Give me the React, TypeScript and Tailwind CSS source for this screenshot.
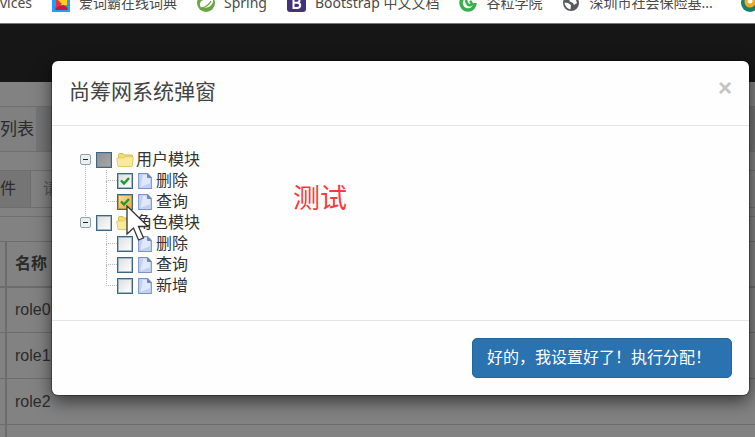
import React, { useState } from 'react';
import type { ReactNode } from 'react';

const cjk = 'font-["Liberation_Sans","Noto_Sans_CJK_SC",sans-serif]';

const DictIcon = () => (
  <svg viewBox="0 0 18 18" className="size-[18px] shrink-0" aria-hidden="true">
    <rect width="18" height="18" fill="#1da1f2" />
    <rect x="4" y="2" width="11" height="9" fill="#ffd21f" />
    <path d="M3.500 16V13.500L8 11L9.500 12L11 11L15.500 13.500V16Z" fill="#d4143c" />
    <path d="M4 14V4L10 10Z" fill="#e8304a" />
  </svg>
);

const SpringIcon = () => (
  <svg viewBox="0 0 18 18" className="size-[18px] shrink-0" aria-hidden="true">
    <circle cx="9" cy="9" r="9" fill="#68a63f" />
    <path d="M15.5 2.5C14 5 11 5 8 5.500C3 6.500 1.500 10 4 13.500C9 14.500 14 13 15.500 9.500C16.500 7 16 4.500 15.500 2.500Z" fill="#fff" />
    <path d="M4 14.200C8 13.500 12 11 14 7" stroke="#68a63f" strokeWidth="1.3" fill="none" />
  </svg>
);

const BootstrapIcon = () => (
  <svg viewBox="0 0 19 18" className="h-[18px] w-[19px] shrink-0" aria-hidden="true">
    <rect width="19" height="18" rx="3" fill="#46307c" />
    <path d="M6.500 4H10Q12.500 4 12.500 6.300Q12.500 8.700 10 8.700H6.500M10 8.700Q13.200 8.700 13.200 11.300Q13.200 14 10 14H6.500V4" stroke="#fff" strokeWidth="2" fill="none" />
  </svg>
);

const AcademyIcon = () => (
  <svg viewBox="0 0 18 18" className="size-[18px] shrink-0" aria-hidden="true">
    <path d="M9 2A7 7 0 1 0 16 9" stroke="#35b04a" strokeWidth="3.500" fill="none" />
    <path d="M7 6Q8 12 12 11Q14 10 11 7" stroke="#35b04a" strokeWidth="2.500" fill="none" />
  </svg>
);

const GlobeIcon = () => (
  <svg viewBox="0 0 18 18" className="size-[18px] shrink-0" aria-hidden="true">
    <circle cx="9" cy="9" r="8" fill="#57595c" />
    <path d="M2.500 8.500L6 9L9 11L8.500 15.500Q3 14 2.500 8.500ZM10 4L14 6L15 9L12 11L11 9L7 7Z" fill="#fff" />
  </svg>
);

const RingIcon = () => (
  <svg viewBox="0 0 18 18" className="ml-2 size-[18px] shrink-0" aria-hidden="true">
    <circle cx="9" cy="9" r="9" fill="#16806a" />
    <circle cx="9" cy="8" r="5.500" fill="#f8a91f" />
    <circle cx="9" cy="7" r="2.500" fill="#fff" />
  </svg>
);

const bookmarks: { label: string; icon: ReactNode }[] = [
  { label: '爱词霸在线词典', icon: <DictIcon /> },
  { label: 'Spring', icon: <SpringIcon /> },
  { label: 'Bootstrap 中文文档', icon: <BootstrapIcon /> },
  { label: '谷粒学院', icon: <AcademyIcon /> },
  { label: '深圳市社会保险基...', icon: <GlobeIcon /> },
  { label: '', icon: <RingIcon /> },
];

const BookmarkBar = () => (
  <nav className="h-6 overflow-hidden border-b border-[#777] bg-white font-['Noto_Sans','Noto_Sans_CJK_SC',sans-serif] text-[14px] leading-5 text-[#4a4a4a]">
    <div className="-mt-[7px] flex items-center gap-5 whitespace-nowrap">
      <a href="#services" className="flex w-8 shrink-0 justify-end">vices</a>
      {bookmarks.map(({ label, icon }) => (
        <a key={label} href="#bookmark" aria-label={label || 'bookmark'} className="flex shrink-0 items-center gap-[9px]">
          {icon}
          {label && <span>{label}</span>}
        </a>
      ))}
    </div>
  </nav>
);

const RolePage = () => (
  <div className={`${cjk} min-h-[413px] overflow-hidden bg-[#828282] text-[16px] text-[#2b2b2b]`}>
    <div className="h-[58px] bg-[#161616]" />
    <div className="mt-6 flex h-[46px] border-y border-[#6f6f6f] bg-[#757575] text-[17px]">
      <h1 className="flex w-9 items-center bg-[#808080] pt-0.5">列表</h1>
    </div>
    <div className="mt-[18px] flex h-[38px] border-y border-[#6f6f6f]">
      <label htmlFor="query" className="flex w-[31px] shrink-0 items-center border-r border-[#6c6c6c] bg-[#757575]">件</label>
      <input id="query" type="text" placeholder="请输入查询条件" className="w-40 pl-3 placeholder:text-[#555]" />
    </div>
    <div className="mt-2 h-px bg-[#707070]" />
    <table className="mt-6 w-full table-fixed border-collapse text-left">
      <thead>
        <tr className="h-[45px] border-t border-b-2 border-t-[#6c6c6c] border-b-[#6c6c6c]">
          <th className="w-[6px] border-r-2 border-[#6c6c6c]" />
          <th className="px-2 font-bold">名称</th>
        </tr>
      </thead>
      <tbody>
        {['role0', 'role1', 'role2', ''].map((role) => (
          <tr key={role} className="h-[46px] border-b border-[#6c6c6c]">
            <td className="border-r-2 border-[#6c6c6c]" />
            <td className="px-2">{role}</td>
          </tr>
        ))}
      </tbody>
    </table>
  </div>
);

const FolderIcon = () => (
  <svg viewBox="0 0 18 16" className="h-4 w-[18px] shrink-0" aria-hidden="true">
    <path d="M2.500 14V2.500Q2.500 1.500 3.500 1.500H7L8.500 3H15.500Q16.500 3 16.500 4V13L15.500 14.500H3Z" fill="#f2dc78" stroke="#d8bb4d" />
    <path d="M.7 7Q.6 6 1.600 6H7.500L9 4.800H16.500Q17.500 4.800 17.300 6L16.300 13.500Q16 14.600 15 14.600H3Q2 14.600 1.800 13.600Z" fill="#f8ea9d" stroke="#dfc65f" strokeWidth=".8" />
  </svg>
);

const FileIcon = () => (
  <svg viewBox="0 0 14 16" className="h-4 w-3.5 shrink-0" aria-hidden="true">
    <path d="M.7.7H9.500L13.300 4.500V15.300H.7Z" fill="#dfe9fb" stroke="#7d92c4" strokeWidth="1.2" />
    <path d="M2 14V2H5L2.500 14ZM2 14L12.500 10V14.500H2Z" fill="#bfd1f3" />
    <path d="M9.500 1.300V4.500H12.700Z" fill="#6f8fcb" stroke="#5b7bb8" strokeWidth=".8" />
  </svg>
);

type NodeProps = { id: string; label: string; checked?: boolean; partial?: boolean; hover?: boolean; icon: ReactNode };

const NodeCheck = ({ id, label, checked = false, partial, hover, icon }: NodeProps) => {
  const [on, setOn] = useState(checked);
  const fill = partial
    ? 'from-[#8e8f92] to-[#a9a8a8] shadow-[inset_0_0_0_1px_#7f93a3]'
    : hover
      ? 'from-[#fbe3a0] to-[#e8a52c] shadow-[inset_0_0_0_1px_#c79a48]'
      : 'from-[#dcdedd] to-[#ffffff] shadow-[inset_0_0_0_1px_#a3bac6]';

  return (
    <div className="flex h-[21px] items-center">
      <span className="relative grid size-4 shrink-0 place-items-center">
        <input
          id={id}
          type="checkbox"
          checked={on}
          onChange={(e) => setOn(e.target.checked)}
          className={`size-4 appearance-none border border-[#3f6680] bg-linear-to-br ${fill}`}
        />
        {on && (
          <svg viewBox="0 0 16 16" className="pointer-events-none absolute inset-0 size-4" aria-hidden="true">
            <path d="M4 7.500L7 10.500L12 5" stroke="#1f9a2c" strokeWidth="2.400" fill="none" />
          </svg>
        )}
      </span>
      <label htmlFor={id} className="flex items-center whitespace-nowrap">{icon}{label}</label>
    </div>
  );
};

const modules = [
  { label: '用户模块', partial: true, items: [{ label: '删除', checked: true }, { label: '查询', checked: true, hover: true }] },
  { label: '角色模块', partial: false, items: [{ label: '删除' }, { label: '查询' }, { label: '新增' }] },
];

const PermissionTree = () => (
  <ul className="text-[16px] leading-[21px] text-[#333]">
    {modules.map((group, g) => (
      <li key={group.label} className="flex gap-[5px]">
        <div className="flex w-3 flex-col items-center">
          <button type="button" aria-label="折叠" className="mt-[5px] grid h-[11px] w-[11px] shrink-0 place-items-center rounded-[2px] border border-[#8ba3b5] bg-[#eeeeea]">
            <span className="h-px w-[5px] bg-[#222]" />
          </button>
          {g === 0 && <span className="-mb-1 grow border-l border-dotted border-[#bbb]" />}
        </div>
        <div>
          <NodeCheck
            id={`group-${g}`}
            label={group.label}
            partial={group.partial}
            icon={<span className="pr-0.5 pl-1"><FolderIcon /></span>}
          />
          <ul className="ml-2.5">
            {group.items.map((item, i) => (
              <li key={item.label} className="flex">
                <span className="flex w-[11px] flex-col">
                  <span className="h-[11px] border-b border-l border-dotted border-[#bbb]" />
                  {i < group.items.length - 1 && <span className="grow border-l border-dotted border-[#bbb]" />}
                </span>
                <NodeCheck id={`node-${g}-${i}`} {...item} icon={<span className="pr-1 pl-[5px]"><FileIcon /></span>} />
              </li>
            ))}
          </ul>
        </div>
      </li>
    ))}
  </ul>
);

const Pointer = () => (
  <svg viewBox="0 0 24 38" className="pointer-events-none absolute top-[79px] left-[74px] h-[38px] w-6" aria-hidden="true">
    <path d="M1 1V29L7.500 23L12.500 35L17.500 33L12.500 21.500H22Z" fill="#fff" stroke="#333" strokeWidth="1.300" />
  </svg>
);

const RoleDialog = () => (
  <section role="dialog" aria-labelledby="dialog-title" className={`${cjk} rounded-md bg-[#fefefe] shadow-[0_0_0_1px_rgba(0,0,0,0.3),0_6px_18px_rgba(0,0,0,0.6)]`}>
    <header className="flex items-start justify-between border-b border-[#e5e5e5] px-[17px] pt-4 pb-[18px]">
      <h2 id="dialog-title" className="text-[21px] leading-[30px] text-[#444]">尚筹网系统弹窗</h2>
      <button type="button" aria-label="关闭" className="text-[24px] leading-[22px] font-bold text-[#c4c4c4]">×</button>
    </header>
    <div className="relative flex px-[27px] pt-[23px] pb-6">
      <PermissionTree />
      <p className="mt-8 ml-[93px] text-[27px] leading-9 text-[#fb3b3b]">测试</p>
      <Pointer />
    </div>
    <footer className="flex justify-end border-t border-[#e5e5e5] px-[17px] py-[17px]">
      <button type="button" className="rounded-[5px] border border-[#2367a0] bg-[#2b72b0] py-[7px] pr-5 pl-3.5 text-[16px] leading-6 text-white">
        好的，我设置好了！执行分配！
      </button>
    </footer>
  </section>
);

const App = () => (
  <main lang="zh-CN" className="relative h-screen overflow-hidden">
    <BookmarkBar />
    <RolePage />
    <div className="absolute inset-x-0 top-[61px] pr-1.5 pl-[52px]">
      <RoleDialog />
    </div>
  </main>
);

export default App;
